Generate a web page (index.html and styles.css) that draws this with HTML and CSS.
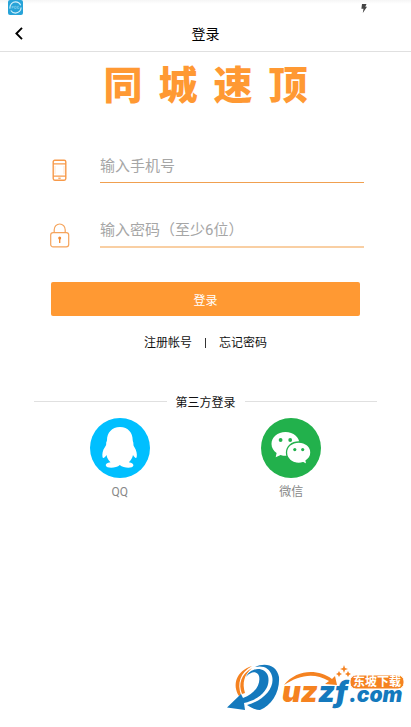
FILE: index.html
```html
<!DOCTYPE html>
<html lang="zh-CN">
<head>
<meta charset="utf-8">
<meta name="viewport" content="width=device-width, initial-scale=1">
<title>登录</title>
<link rel="stylesheet" href="styles.css">
</head>
<body>
<div class="status">
  <svg class="status-app" viewBox="0 0 15 15" aria-hidden="true">
    <rect width="15" height="15" rx="2" fill="#27a3d8"/>
    <circle cx="7.5" cy="7.5" r="5.6" fill="none" stroke="#d5f1fb" stroke-width="1.1" stroke-dasharray="14 2 16 3"/>
    <path d="M4 6.2v2.4M4 6.4h1.4v1H4M6.6 6.3h1.6v2.2H6.6zM11 6.3H9.5v2.2H11V7.4" fill="none" stroke="#8bd4ef" stroke-width=".6"/>
  </svg>
  <svg class="status-charge" viewBox="0 0 6 9" aria-hidden="true"><path d="M1 0h4.5L4.3 2.8H6L1.8 9l.7-4.2H.4z" fill="#444"/></svg>
</div>
<header class="header">
  <button class="back" type="button" aria-label="返回">
    <svg viewBox="0 0 8 13" aria-hidden="true"><path d="M7 .8L1.4 6.5 7 12.2" fill="none" stroke="#000" stroke-width="1.9"/></svg>
  </button>
  <h1 class="title">登录</h1>
</header>
<main>
  <div class="brand"><span>同</span><span>城</span><span>速</span><span>顶</span></div>
  <form class="form">
    <div class="field">
      <label for="phone" aria-label="手机号">
        <svg class="icon-phone" viewBox="0 0 20 24" fill="none" stroke="#f79a4a" aria-hidden="true">
          <rect x="3.2" y="1.2" width="12.6" height="20" rx="1.6" stroke-width="1.4"/>
          <path d="M3 4.9h13M3 17.1h13" stroke-width="1.3"/>
          <path d="M5 7v8M14 7v8" stroke="#fbd5b0" stroke-width=".6"/>
          <path d="M8.3 19.2h2.4" stroke-width="1.2"/>
        </svg>
      </label>
      <input id="phone" type="tel" placeholder="输入手机号">
    </div>
    <div class="field field-password">
      <label for="password" aria-label="密码">
        <svg class="icon-lock" viewBox="0 0 20 25" fill="none" stroke="#f5a45c" stroke-width="1.2" aria-hidden="true">
          <rect x=".7" y="9.6" width="18" height="14.2" rx="2.4"/>
          <path d="M4.2 9.5V6.8a5.5 5.8 0 0 1 11 0v2.7"/>
          <path d="M9.7 15v5" stroke="#f28a30" stroke-width="1.3"/>
          <circle cx="9.7" cy="15" r="1.5" fill="#f28a30" stroke="none"/>
        </svg>
      </label>
      <input id="password" type="password" placeholder="输入密码（至少6位）">
    </div>
    <button class="submit" type="submit">登录</button>
  </form>
  <nav class="links"><a href="#register">注册帐号</a><span class="bar"></span><a href="#forgot">忘记密码</a></nav>
  <section class="third">
    <h2 class="third-title">第三方登录</h2>
    <div class="providers">
      <a class="provider" href="#qq">
        <svg viewBox="0 0 60 60" aria-hidden="true">
          <circle cx="30" cy="30" r="30" fill="#00bfff"/>
          <path d="M30 9C21.700 9 17 15 17 22C17 23.500 16 24 16.200 25.500C16.200 27 16 27.500 15 29C12.500 32.500 12 36 12.500 39C13 41 15 39.500 16.500 37C17 40 18.500 42.500 20.500 44.300C17 45 15.500 46 15.800 47.500C16.500 50.800 26.500 50.300 29.800 47C33.500 50.300 42.700 50.800 43.400 47.500C43.600 46 42 45 38.800 44.300C41 42.500 42.300 40 43 37C44.500 39.500 46.200 41 46.700 39C47.300 36 46.500 32.500 44.300 29C43.300 27.500 43.500 27 43.400 25.500C43.500 24 42.700 23.500 42.700 22C42.700 15 38.300 9 30 9Z" fill="#fff"/>
        </svg>
        <span>QQ</span>
      </a>
      <a class="provider" href="#wechat">
        <svg viewBox="0 0 60 60" aria-hidden="true">
          <circle cx="30" cy="30" r="30" fill="#22b14c"/>
          <path d="M24.500 14C16.500 14 10.500 19.300 10.500 26C10.500 29.700 12.500 32.800 15.600 35L14.700 39.300L19.600 36.900C21.200 37.500 22.800 37.800 24.500 37.800C32.500 37.800 38.500 32.700 38.500 26C38.500 19.300 32.500 14 24.500 14Z" fill="#fff"/>
          <path d="M37.700 24C30.700 24 25.500 28.700 25.500 34.600C25.500 40.600 30.700 45.300 37.700 45.300C39.300 45.300 40.800 45.100 42.200 44.600L45.900 46.500L45.100 42.900C48 40.900 49.900 38 49.900 34.600C49.900 28.700 44.700 24 37.700 24Z" fill="#fff" stroke="#22b14c" stroke-width="1.300"/>
          <g fill="#22b14c"><circle cx="19.600" cy="22" r="1.900"/><circle cx="29.200" cy="22" r="1.900"/><circle cx="33.800" cy="31.600" r="1.600"/><circle cx="41.700" cy="31.600" r="1.600"/></g>
        </svg>
        <span>微信</span>
      </a>
    </div>
  </section>
</main>
<svg class="watermark" viewBox="0 0 184 54" role="img" aria-label="东坡下载 uzzf.com">
  <path d="M12 33C5 22 9 8 25 3C13 10 10 20 14 32Z" fill="#f58220"/>
  <path d="M15 31C11 21 14 11 25 5C17 12 15 20 18 30Z" fill="#f58220"/>
  <path d="M19 14C23 4 38 3 41 13C44 25 34 36 17 40L18 47L0 44.500L14 31L16 35C28 31 34 21 32 13C30 8 24 8 19 14Z" fill="#1479bd"/>
  <path d="M28 4C38-1 50 2 52 14C53 29 45 42 33 47C29 47 25 45 20 42C38 37 48 24 45 13C43 5 36 2 28 4Z" fill="#1479bd"/>
  <path d="M57 22C70 6 91 6 105 16L108 13L110 22L98 21L102 18C87 9 72 12 57 22Z" fill="#f58220"/>
  <text class="domain" x="55" y="39"><tspan class="orange">uz</tspan><tspan>zf</tspan></text>
  <text class="suffix" x="122" y="39">.com</text>
  <rect x="123" y="12" width="54" height="14" rx="6" fill="#f58220" stroke="#fff"/>
  <text class="site" x="126" y="23">东坡下载</text>
  <path d="M117 2l1 3 3 1-3 1-1 3-1-3-3-1 3-1zM112 8l1 2 2 1-2 1-1 2-1-2-2-1 2-1zM121 8l1 2 2 1-2 1-1 2-1-2-2-1 2-1z" fill="#f58220"/>
</svg>
</body>
</html>
```

FILE: styles.css
```css
* { box-sizing: border-box; }

body {
  margin: 0;
  min-height: 100vh;
  position: relative;
  background: #fff;
  color: #111;
  font: 12px/16px Roboto, "Noto Sans CJK SC", sans-serif;
}

a { color: inherit; text-decoration: none; }
button, input { font-family: inherit; }
svg { display: block; }

.status {
  height: 16px;
  padding: 0 44px 0 8px;
  display: flex;
  justify-content: space-between;
  background: linear-gradient(#f5f5f5, #fff 4px);
}
.status-app { width: 15px; height: 15px; }
.status-charge { width: 6px; height: 9px; margin-top: 4px; }

.header {
  height: 36px;
  display: grid;
  grid-template-columns: 38px 1fr 38px;
  align-items: center;
  border-bottom: 1px solid #e0e0e0;
}
.back {
  height: 32px;
  padding: 0 0 0 15px;
  border: 0;
  background: none;
}
.back svg { width: 8px; height: 13px; }
.title {
  margin: 0;
  text-align: center;
  font-size: 14px;
  font-weight: 400;
  color: #000;
}

.brand {
  display: flex;
  justify-content: center;
  gap: 16px;
  padding-top: 12px;
  color: #ff9933;
  font-size: 39px;
  line-height: 44px;
  font-weight: 900;
}

.form { padding-top: 39px; }
.field {
  display: grid;
  grid-template-columns: 50px 1fr;
  align-items: end;
  margin: 0 47px 28px 50px;
}
.field input {
  width: 100%;
  height: 36px;
  padding: 2px 0 0;
  border: 0;
  border-bottom: 1px solid #f0a050;
  border-radius: 0;
  outline: 0;
  background: none;
  font-size: 15px;
  color: #333;
}
.field-password input { height: 37px; border-bottom: 2px solid #f9cfa3; }
.field input::placeholder { color: #a6a6a6; opacity: 1; }
.icon-phone { width: 20px; height: 24px; }
.icon-lock { width: 20px; height: 25px; }

.submit {
  display: block;
  width: calc(100% - 102px);
  height: 34px;
  margin: 34px auto 0;
  padding: 0;
  border: 0;
  border-radius: 2px;
  background: #ff9933;
  color: #fff;
  font-size: 12px;
}

.links {
  display: flex;
  justify-content: center;
  align-items: center;
  gap: 13px;
  margin-top: 19px;
}
.bar { width: 1px; height: 10px; background: #333; }

.third { margin: 44px 34px 0; }
.third-title {
  display: flex;
  align-items: center;
  gap: 9px;
  margin: 0;
  font-size: 12px;
  font-weight: 400;
}
.third-title::before, .third-title::after {
  content: "";
  flex: 1;
  height: 1px;
  margin-bottom: 4px;
  background: #e0e0e0;
}
.providers {
  display: grid;
  grid-template-columns: 1fr 1fr;
  padding-top: 7px;
}
.provider {
  display: flex;
  flex-direction: column;
  align-items: center;
  gap: 6px;
  color: #888;
}
.provider svg { width: 60px; height: 60px; }

.watermark {
  position: absolute;
  right: 0;
  bottom: 10px;
  width: 184px;
  height: 54px;
}
.domain, .suffix {
  font: italic 900 29px Inter, sans-serif;
  fill: #1479bd;
}
.suffix { font-size: 21px; }
.orange { fill: #f58220; }
.site {
  font: 700 12px/12px "Noto Sans CJK SC", sans-serif;
  fill: #fff;
}
```
